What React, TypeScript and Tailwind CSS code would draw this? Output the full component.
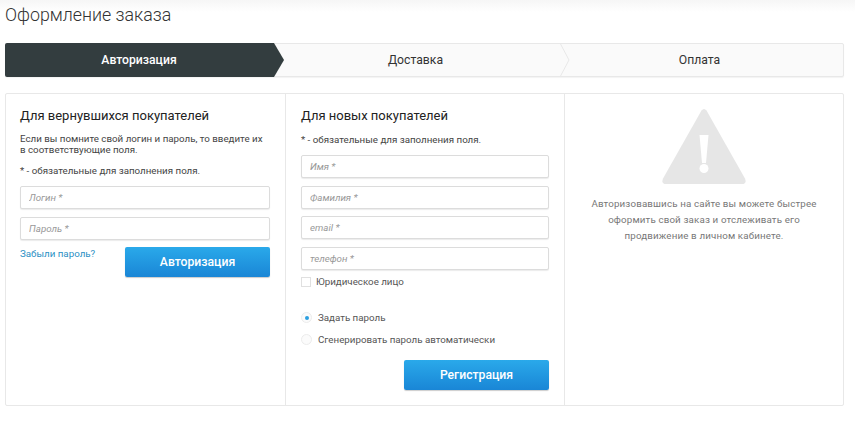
import React from 'react';

const Field: React.FC<{ placeholder: string }> = ({ placeholder }) => (
    <input
        placeholder={placeholder}
        className="block w-full h-[23px] rounded-[2px] border border-[#dcdcdc] bg-white px-[8px] text-[9.75px] italic outline-none shadow-[0_1px_1px_rgba(0,0,0,0.08)] placeholder:text-[#999]"
    />
);

const Radio: React.FC<{ checked?: boolean; label: string }> = ({ checked, label }) => (
    <div className="flex items-center h-[12px]">
        <span className="flex items-center justify-center w-[11px] h-[11px] rounded-full bg-[#fbfbfb] border border-[#ececec]">
            {checked && <span className="w-[4px] h-[4px] rounded-full bg-[#2b9fe0]" />}
        </span>
        <span className="ml-[6px] text-[9.75px] text-[#555]">{label}</span>
    </div>
);

const Button: React.FC<{ label: string }> = ({ label }) => (
    <button className="w-[145px] rounded-[2px] bg-gradient-to-b from-[#2aa9ea] to-[#1a86d6] text-[12.2px] font-medium text-white shadow-[0_1px_1px_rgba(0,0,0,0.2)]">
        {label}
    </button>
);

const App: React.FC = () => {
    return (
        <div className="w-[855px] h-[433px] overflow-hidden bg-white font-['Roboto',sans-serif] text-[#333]">
            <div className="h-[43px] pl-[5px] pt-[2px] bg-gradient-to-b from-[#f6f6f6] to-white to-[12px]">
                <h1 className="text-[17.8px] font-light leading-[26px] text-[#333]">Оформление заказа</h1>
            </div>

            <div className="relative mx-[5px] flex h-[34px] w-[839px] rounded-[2px] border border-[#e8e8e8] bg-[#fafafa] shadow-[0_1px_1px_rgba(0,0,0,0.05)]">
                <div className="relative flex h-full w-[279px] -my-px -ml-px box-content py-px items-center justify-center text-[12.2px] font-medium text-white">
                    <svg className="absolute left-0 top-0" width="280" height="34" viewBox="0 0 280 34">
                        <path d="M2 0H269L279 17L269 34H2Q0 34 0 32V2Q0 0 2 0Z" fill="#333d3f" />
                    </svg>
                    <span className="relative mr-[11px]">Авторизация</span>
                </div>
                <div className="flex w-[279px] items-center justify-center text-[12.2px] text-[#333]">
                    <span className="-ml-[16px]">Доставка</span>
                </div>
                <div className="relative flex flex-1 items-center justify-center text-[12.2px] text-[#333]">
                    <svg className="absolute -left-[4px] -top-px" width="12" height="34" viewBox="0 0 12 34" fill="none">
                        <path d="M1 0L10 17L1 34" stroke="#e8e8e8" />
                    </svg>
                    <span className="-ml-[7px]">Оплата</span>
                </div>
            </div>

            <div className="mx-[5px] mt-[16px] flex h-[313px] w-[839px] rounded-[2px] border border-[#e8e8e8]">
                <div className="w-[280px] border-r border-[#e8e8e8] pl-[14px] pr-[15px] pt-[14px]">
                    <h2 className="text-[13px] leading-[16px] text-[#222]">Для вернувшихся покупателей</h2>
                    <p className="mt-[9px] text-[9.75px] leading-[11px] text-[#444]">
                        Если вы помните свой логин и пароль, то введите их в соответствующие поля.
                    </p>
                    <p className="mt-[10px] text-[9.75px] leading-[12px] text-[#444]">* - обязательные для заполнения поля.</p>
                    <div className="mt-[9px] flex flex-col gap-[8px]">
                        <Field placeholder="Логин *" />
                        <Field placeholder="Пароль *" />
                    </div>
                    <div className="mt-[7px] flex justify-between">
                        <a className="text-[9.75px] leading-[14px] text-[#2a8fc4]">Забыли пароль?</a>
                        <div className="flex h-[30px]">
                            <Button label="Авторизация" />
                        </div>
                    </div>
                </div>

                <div className="w-[279px] border-r border-[#e8e8e8] pl-[15px] pr-[15px] pt-[14px]">
                    <h2 className="text-[13px] leading-[16px] text-[#222]">Для новых покупателей</h2>
                    <p className="mt-[10px] text-[9.75px] leading-[12px] text-[#444]">* - обязательные для заполнения поля.</p>
                    <div className="mt-[9px] flex flex-col gap-[7.67px]">
                        <Field placeholder="Имя *" />
                        <Field placeholder="Фамилия *" />
                        <Field placeholder="email *" />
                        <Field placeholder="телефон *" />
                    </div>
                    <div className="mt-[6px] flex items-center h-[12px]">
                        <span className="w-[10px] h-[10px] border border-[#e0e0e0] bg-white" />
                        <span className="ml-[5px] text-[9.75px] text-[#555]">Юридическое лицо</span>
                    </div>
                    <div className="mt-[24px] flex flex-col gap-[10px]">
                        <Radio checked label="Задать пароль" />
                        <Radio label="Сгенерировать пароль автоматически" />
                    </div>
                    <div className="mt-[14px] flex h-[30px] justify-end">
                        <Button label="Регистрация" />
                    </div>
                </div>

                <div className="flex-1 flex flex-col items-center pt-[14px]">
                    <svg width="84" height="77" viewBox="0 0 84 77">
                        <path d="M39.5 2.5Q42 -0.5 44.5 2.5L83 70.5Q85 76 80 76H4Q-1 76 1 70.5Z" fill="#e6e6e6" />
                        <path d="M37.5 27H46.5L44 55H40Z" fill="#fff" />
                        <circle cx="42" cy="60.5" r="4.5" fill="#fff" />
                    </svg>
                    <p className="mt-[11px] w-[236px] text-center text-[9.75px] leading-[16px] tracking-[0.15px] text-[#777]">
                        Авторизовавшись на сайте вы можете быстрее оформить свой заказ и отслеживать его продвижение в личном кабинете.
                    </p>
                </div>
            </div>
        </div>
    );
};

export default App;
